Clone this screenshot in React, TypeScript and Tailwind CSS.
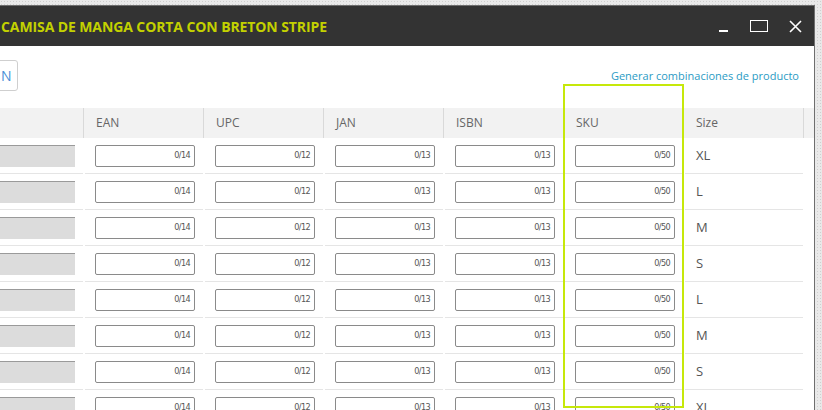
import React from "react";

const columns = [
  { id: "ref", label: "", max: "" },
  { id: "ean", label: "EAN", max: "0/14" },
  { id: "upc", label: "UPC", max: "0/12" },
  { id: "jan", label: "JAN", max: "0/13" },
  { id: "isbn", label: "ISBN", max: "0/13" },
  { id: "sku", label: "SKU", max: "0/50" },
];

const sizes = ["XL", "L", "M", "S", "L", "M", "S", "XL"];

const Counter = ({ value }: { value: string }) => (
  <div className="ml-[10px] flex h-[22px] w-[100px] items-center justify-end rounded-[2px] border border-[#8a8a8a] bg-white pr-[4px]">
    <span className="font-['DejaVu_Sans_Condensed',sans-serif] text-[9px] tracking-[-0.6px] text-[#555]">
      {value}
    </span>
  </div>
);

const App = () => {
  return (
    <div className="relative h-[410px] w-[822px] overflow-hidden bg-[#e9e9e9] bg-[radial-gradient(#cfcfcf_1px,transparent_1px)] bg-[size:3px_3px] pt-[5px] font-['Open_Sans',sans-serif]">
      <div className="h-[405px] w-[815px] overflow-hidden border-t border-r border-[#6e6e6e] bg-white">
        {/* title bar */}
        <div className="flex h-[40px] items-center justify-between bg-[#333333]">
          <h1 className="mt-[1px] pl-[1px] text-[14px] font-bold tracking-[-0.1px] text-[#c3d100]">
            CAMISA DE MANGA CORTA CON BRETON STRIPE
          </h1>
          <div className="flex items-center">
            <div className="mt-[10px] h-[1.5px] w-[9px] bg-white" />
            <div className="ml-[22px] h-[12px] w-[18px] border-[1.5px] border-white" />
            <svg className="ml-[21px] mr-[12px]" width="13" height="13" viewBox="0 0 13 13">
              <path d="M1 1L12 12M12 1L1 12" stroke="#fff" strokeWidth="1.6" />
            </svg>
          </div>
        </div>

        {/* toolbar */}
        <div className="flex h-[62px] items-center justify-between pr-[15px]">
          <button className="-ml-[20px] mb-[3px] h-[31px] rounded-[3px] border border-[#cfcfcf] pl-[20px] pr-[5px] text-[14px] text-[#4a8fd6]">
            N
          </button>
          <a className="mb-[2px] text-[11px] text-[#2b9bc4]">Generar combinaciones de producto</a>
        </div>

        {/* table */}
        <div className="-ml-[36px]">
          <div className="flex h-[30px] bg-[#f2f2f2]">
            {columns.map((c) => (
              <div
                key={c.id}
                className="flex w-[120px] items-center border-r border-[#d9d9d9] pl-[12px] text-[12px] text-[#666]"
              >
                {c.label}
              </div>
            ))}
            <div className="flex w-[120px] items-center border-r border-[#d9d9d9] pl-[12px] text-[12px] text-[#666]">
              Size
            </div>
          </div>

          {sizes.map((s, i) => (
            <div key={i} className="flex h-[36px]">
              {columns.map((c) => (
                <div key={c.id} className="w-[120px] px-px">
                  <div className="flex h-full items-center border-b border-[#e5e5e5]">
                    {c.id === "ref" ? (
                      <div className="ml-[10px] h-[22px] w-[100px] border-t border-[#9a9a9a] bg-[#dcdcdc]" />
                    ) : (
                      <Counter value={c.max} />
                    )}
                  </div>
                </div>
              ))}
              <div className="w-[120px] px-px">
                <div className="flex h-full items-center border-b border-[#e5e5e5] pl-[11px] text-[13px] text-[#555]">
                  {s}
                </div>
              </div>
            </div>
          ))}
        </div>
      </div>

      {/* highlight around SKU column */}
      <div className="absolute left-[563px] top-[84px] h-[324px] w-[121px] border-2 border-[#c6e80a]" />
    </div>
  );
};

export default App;
